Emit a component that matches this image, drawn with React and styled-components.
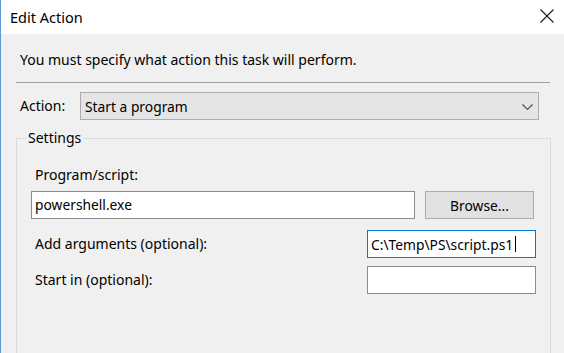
import React from "react";
import styled, { createGlobalStyle } from "styled-components";

const Global = createGlobalStyle`
  * { box-sizing: border-box; }
  html, body { margin: 0; padding: 0; background: #f0f0f0; overflow: hidden; }
  body { font-family: "Noto Sans", "Open Sans", sans-serif; color: #000; }
`;

const Window = styled.div`
  width: 564px;
  height: 353px;
  background: #f0f0f0;
  border-left: 1px solid #5b9bd5;
  display: flex;
  flex-direction: column;
  overflow: hidden;
`;

const TitleBar = styled.div`
  height: 34px;
  flex: none;
  background: #ffffff;
  display: flex;
  align-items: center;
  justify-content: space-between;
  padding: 0 9px 0 9px;
`;

const Title = styled.span`
  font-size: 14.5px;
  color: #000;
  margin-top: -1px;
`;

const CloseIcon = styled.svg`
  display: block;
  width: 14px;
  height: 14px;
  margin-right: 1px;
  margin-top: -3px;
`;

const Body = styled.div`
  flex: 1;
  padding: 17px 0 0 15px;
  display: flex;
  flex-direction: column;
`;

const Intro = styled.div`
  font-size: 14px;
  line-height: 18px;
  padding-left: 4px;
`;

const Separator = styled.div`
  width: 534px;
  height: 1px;
  background: #a0a0a0;
  margin-top: 13px;
`;

const ActionRow = styled.div`
  display: flex;
  align-items: center;
  margin-top: 9px;
  padding-left: 4px;
`;

const Label = styled.span`
  font-size: 14px;
  line-height: 18px;
  width: ${(p) => p.$w || "auto"};
  flex: none;
`;

const Select = styled.div`
  width: 459px;
  height: 28px;
  background: #e5e5e5;
  border: 1px solid #adadad;
  display: flex;
  align-items: center;
  justify-content: space-between;
  padding: 0 5px 0 4px;
  font-size: 13.8px;
`;

const Chevron = styled.svg`
  width: 11px;
  height: 6px;
  display: block;
  margin-top: 1px;
`;

const Group = styled.fieldset`
  margin: 9px 0 0 0;
  width: 535px;
  flex: 1;
  border: 1px solid #dcdcdc;
  border-bottom: none;
  padding: 0;
  min-width: 0;
`;

const Legend = styled.legend`
  font-size: 14px;
  line-height: 18px;
  padding: 0 2px;
  margin-left: 9px;
`;

const GroupContent = styled.div`
  padding: 19px 0 0 14px;
`;

const FieldLabel = styled.div`
  font-size: 14px;
  line-height: 18px;
  padding-left: 4px;
`;

const Row = styled.div`
  display: flex;
  align-items: center;
  justify-content: space-between;
  margin-top: ${(p) => p.$mt || 0}px;
  width: ${(p) => p.$w || 504}px;
`;

const Input = styled.div`
  width: ${(p) => p.$w}px;
  height: 28px;
  background: #fff;
  border: 1px solid ${(p) => (p.$focus ? "#0078d7" : "#8c8c8c")};
  font-size: 13.8px;
  display: flex;
  align-items: center;
  padding-left: 3px;
  white-space: nowrap;
`;

const Caret = styled.span`
  display: inline-block;
  width: 1px;
  height: 16px;
  background: #000;
  margin-left: 2px;
`;

const Button = styled.div`
  width: 109px;
  height: 28px;
  background: #e1e1e1;
  border: 1px solid #adadad;
  font-size: 13.8px;
  display: flex;
  align-items: center;
  justify-content: center;
  margin-top: 1px;
`;

export default function App() {
  return (
    <>
      <Global />
      <Window>
        <TitleBar>
          <Title>Edit Action</Title>
          <CloseIcon viewBox="0 0 14 14">
            <path d="M0.5 0.5 L13.5 13.5 M13.5 0.5 L0.5 13.5" stroke="#1a1a1a" strokeWidth="1.1" fill="none" />
          </CloseIcon>
        </TitleBar>
        <Body>
          <Intro>You must specify what action this task will perform.</Intro>
          <Separator />
          <ActionRow>
            <Label $w="60px">Action:</Label>
            <Select>
              <span>Start a program</span>
              <Chevron viewBox="0 0 11 6">
                <path d="M0.5 0.5 L5.5 5.3 L10.5 0.5" stroke="#444" strokeWidth="1.1" fill="none" />
              </Chevron>
            </Select>
          </ActionRow>
          <Group>
            <Legend>Settings</Legend>
            <GroupContent>
              <FieldLabel>Program/script:</FieldLabel>
              <Row $mt={6} $w={503}>
                <Input $w={384}>powershell.exe</Input>
                <Button>Browse...</Button>
              </Row>
              <Row $mt={11} $w={505}>
                <FieldLabel>Add arguments (optional):</FieldLabel>
                <Input $w={169} $focus>
                  C:\Temp\PS\script.ps1
                  <Caret />
                </Input>
              </Row>
              <Row $mt={8} $w={505}>
                <FieldLabel>Start in (optional):</FieldLabel>
                <Input $w={169} />
              </Row>
            </GroupContent>
          </Group>
        </Body>
      </Window>
    </>
  );
}
